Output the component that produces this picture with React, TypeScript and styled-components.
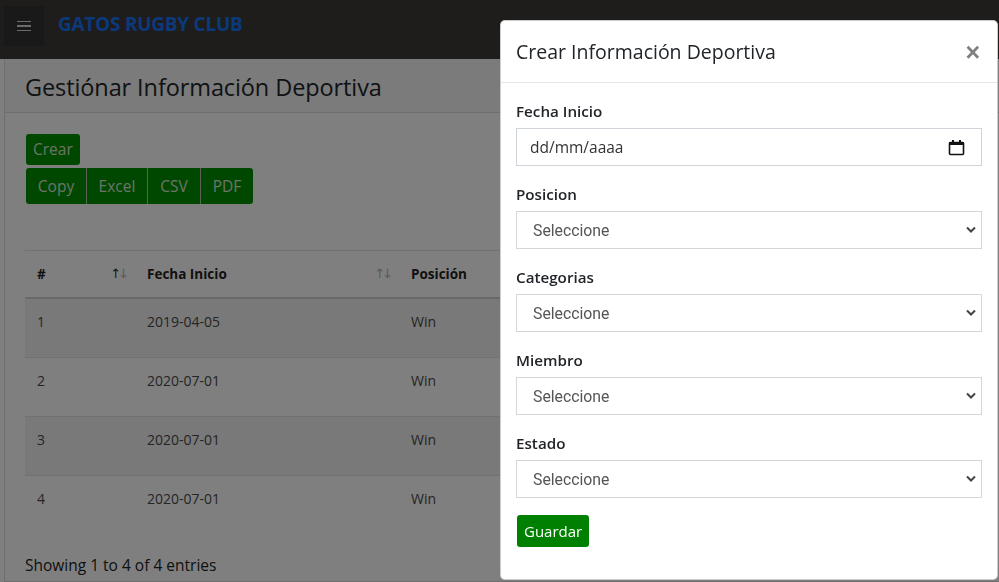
import React from "react";
import styled, { createGlobalStyle } from "styled-components";

const GlobalStyle = createGlobalStyle`
  * { box-sizing: border-box; }
  html, body { margin: 0; padding: 0; }
  body {
    font-family: "Open Sans", "Noto Sans", sans-serif;
    color: #212529;
    background: #ffffff;
    overflow: hidden;
  }
`;

const Page = styled.div`
  width: 999px;
  height: 582px;
  display: flex;
  flex-direction: column;
`;

const Navbar = styled.header`
  height: 59px;
  flex: none;
  background: #3c3a38;
  display: flex;
  align-items: flex-start;
  padding: 6px 4px 0;
  gap: 14px;
`;

const MenuButton = styled.button`
  width: 40px;
  height: 40px;
  border: none;
  background: #323232;
  display: flex;
  flex-direction: column;
  align-items: center;
  justify-content: center;
  gap: 3px;
  padding: 0;
`;

const MenuLine = styled.span`
  display: block;
  width: 14px;
  height: 1.5px;
  background: #d8d8d8;
`;

const Brand = styled.div`
  font-family: "Open Sans", sans-serif;
  font-weight: 700;
  font-size: 19px;
  color: #1672f5;
  line-height: 24px;
  padding-top: 6px;
  letter-spacing: -0.25px;
`;

const Main = styled.main`
  flex: 1;
  padding: 0 0 0 4px;
`;

const Card = styled.section`
  border: 1px solid #dcdcdc;
  border-top: none;
  border-right: none;
  height: 100%;
`;

const CardHeader = styled.div`
  background: #f7f7f7;
  border-bottom: 1px solid #dcdcdc;
  padding: 14px 20px 10px;
`;

const CardTitle = styled.h1`
  margin: 0;
  font-size: 23.5px;
  font-weight: 400;
  line-height: 29px;
  color: #212529;
  letter-spacing: -0.1px;
`;

const CardBody = styled.div`
  padding: 21px 20px 0 20px;
`;

const Toolbar = styled.div`
  display: flex;
  flex-direction: column;
  align-items: flex-start;
  gap: 3px;
  margin-left: 1px;
`;

const GreenButton = styled.button`
  background: #009000;
  color: #d8e8d0;
  border: none;
  border-radius: 3px;
  font-family: "Open Sans", sans-serif;
  font-size: 15.5px;
  line-height: 23px;
  padding: 4px 7px 4px 7px;
`;

const ButtonGroup = styled.div`
  display: inline-flex;
  border-radius: 3px;
  overflow: hidden;
`;

const GroupButton = styled.button<{ $w: number }>`
  width: ${(p) => p.$w}px;
  height: 36px;
  background: #009000;
  color: #d8e8d0;
  border: none;
  border-left: 1px solid #b0c8b0;
  font-family: "Open Sans", sans-serif;
  font-size: 15.5px;
  padding: 0;
  &:first-child { border-left: none; }
`;

const Table = styled.table`
  margin-top: 46px;
  width: 950px;
  border-collapse: collapse;
  font-family: "Open Sans", sans-serif;
  font-size: 14px;
`;

const Th = styled.th<{ $w?: number }>`
  width: ${(p) => (p.$w ? `${p.$w}px` : "auto")};
  text-align: left;
  font-weight: 700;
  font-size: 13.5px;
  color: #222;
  padding: 12px 12px;
  line-height: 22px;
  border-top: 1px solid #dee2e6;
  border-bottom: 2px solid #cfd3d6;
  position: relative;
`;

const SortIcon = styled.span`
  position: absolute;
  right: 9px;
  top: 12px;
  font-family: "DejaVu Sans", sans-serif;
  font-size: 13px;
  font-weight: 400;
  letter-spacing: -3px;
`;

const Arrow = styled.span<{ $on?: boolean }>`
  color: ${(p) => (p.$on ? "#333" : "#b4b4b4")};
`;

const Tr = styled.tr<{ $striped: boolean }>`
  background: ${(p) => (p.$striped ? "#f2f2f2" : "#ffffff")};
`;

const Td = styled.td`
  height: 59px;
  vertical-align: top;
  padding: 11px 12px 12px;
  line-height: 24px;
  color: #4a4a4a;
  border-top: 1px solid #dee2e6;
`;

const Info = styled.div`
  margin-top: 19px;
  font-size: 15.5px;
  line-height: 24px;
  color: #222;
`;

const Backdrop = styled.div`
  position: fixed;
  inset: 0;
  background: rgba(0, 0, 0, 0.5);
`;

const Modal = styled.div`
  position: fixed;
  top: 20px;
  left: 500px;
  width: 498px;
  height: 560px;
  background: #fff;
  border-radius: 5px;
  border: 1px solid rgba(0, 0, 0, 0.2);
  display: flex;
  flex-direction: column;
`;

const ModalHeader = styled.div`
  display: flex;
  align-items: center;
  justify-content: space-between;
  padding: 15px;
  border-bottom: 1px solid #e6e6e6;
  height: 62px;
`;

const ModalTitle = styled.h2`
  margin: 0;
  font-size: 19.5px;
  font-weight: 500;
  line-height: 30px;
  color: #212529;
`;

const Close = styled.button`
  border: none;
  background: none;
  padding: 0 2px 0 0;
  color: #808080;
  font-size: 25px;
  line-height: 24px;
  font-weight: 700;
  font-family: "Liberation Sans", sans-serif;
`;

const ModalBody = styled.form`
  padding: 16px 15px;
  display: flex;
  flex-direction: column;
`;

const Field = styled.div`
  display: flex;
  flex-direction: column;
  gap: 5px;
  margin-bottom: 16px;
`;

const Label = styled.label`
  font-size: 15.2px;
  font-weight: 600;
  line-height: 24px;
  color: #212529;
`;

const DateBox = styled.div`
  height: 38px;
  border: 1px solid #ced4da;
  display: flex;
  align-items: center;
  justify-content: space-between;
  padding: 0 16px 0 13px;
  font-size: 15.5px;
  color: #333;
`;

const SelectWrap = styled.div`
  position: relative;
`;

const Select = styled.select`
  width: 100%;
  height: 38px;
  appearance: none;
  border: 1px solid #d6d6d6;
  border-radius: 0;
  background: #fff;
  padding: 0 16px;
  font-family: Roboto, sans-serif;
  font-size: 15.8px;
  color: #555;
`;

const Chevron = styled.svg`
  position: absolute;
  right: 6px;
  top: 15px;
  pointer-events: none;
`;

const SaveButton = styled.button`
  align-self: flex-start;
  margin-top: 1px;
  margin-left: 1px;
  background: #008000;
  color: #fff;
  border: none;
  border-radius: 3px;
  font-family: "Open Sans", sans-serif;
  font-size: 15px;
  line-height: 24px;
  padding: 4px 7px;
`;

const rows = [
  { n: 1, date: "2019-04-05", pos: "Win" },
  { n: 2, date: "2020-07-01", pos: "Win" },
  { n: 3, date: "2020-07-01", pos: "Win" },
  { n: 4, date: "2020-07-01", pos: "Win" },
];

const selects = ["Posicion", "Categorias", "Miembro", "Estado"];

function CalendarIcon() {
  return (
    <svg width="17" height="17" viewBox="0 0 17 17">
      <rect x="1.5" y="3.5" width="14" height="12" rx="1" fill="none" stroke="#111" strokeWidth="1.6" />
      <rect x="1" y="3" width="15" height="3" fill="#111" />
      <rect x="4" y="1" width="2" height="3" fill="#111" />
      <rect x="11" y="1" width="2" height="3" fill="#111" />
    </svg>
  );
}

export default function App() {
  return (
    <>
      <GlobalStyle />
      <Page>
        <Navbar>
          <MenuButton aria-label="menu">
            <MenuLine />
            <MenuLine />
            <MenuLine />
          </MenuButton>
          <Brand>GATOS RUGBY CLUB</Brand>
        </Navbar>
        <Main>
          <Card>
            <CardHeader>
              <CardTitle>Gestiónar Información Deportiva</CardTitle>
            </CardHeader>
            <CardBody>
              <Toolbar>
                <GreenButton>Crear</GreenButton>
                <ButtonGroup>
                  <GroupButton $w={60}>Copy</GroupButton>
                  <GroupButton $w={61}>Excel</GroupButton>
                  <GroupButton $w={53}>CSV</GroupButton>
                  <GroupButton $w={53}>PDF</GroupButton>
                </ButtonGroup>
              </Toolbar>
              <Table>
                <thead>
                  <tr>
                    <Th $w={110}>
                      #
                      <SortIcon>
                        <Arrow $on>↑</Arrow>
                        <Arrow>↓</Arrow>
                      </SortIcon>
                    </Th>
                    <Th $w={264}>
                      Fecha Inicio
                      <SortIcon>
                        <Arrow>↑</Arrow>
                        <Arrow>↓</Arrow>
                      </SortIcon>
                    </Th>
                    <Th>Posición</Th>
                  </tr>
                </thead>
                <tbody>
                  {rows.map((r, i) => (
                    <Tr key={r.n} $striped={i % 2 === 0}>
                      <Td>{r.n}</Td>
                      <Td>{r.date}</Td>
                      <Td>{r.pos}</Td>
                    </Tr>
                  ))}
                </tbody>
              </Table>
              <Info>Showing 1 to 4 of 4 entries</Info>
            </CardBody>
          </Card>
        </Main>
      </Page>
      <Backdrop />
      <Modal role="dialog">
        <ModalHeader>
          <ModalTitle>Crear Información Deportiva</ModalTitle>
          <Close type="button" aria-label="Close">×</Close>
        </ModalHeader>
        <ModalBody>
          <Field>
            <Label>Fecha Inicio</Label>
            <DateBox>
              <span>dd/mm/aaaa</span>
              <CalendarIcon />
            </DateBox>
          </Field>
          {selects.map((s) => (
            <Field key={s}>
              <Label>{s}</Label>
              <SelectWrap>
                <Select defaultValue="">
                  <option value="">Seleccione</option>
                </Select>
                <Chevron width="10" height="7" viewBox="0 0 10 7">
                  <path d="M1 1.5 L5 5.5 L9 1.5" fill="none" stroke="#444" strokeWidth="2" />
                </Chevron>
              </SelectWrap>
            </Field>
          ))}
          <SaveButton type="button">Guardar</SaveButton>
        </ModalBody>
      </Modal>
    </>
  );
}
